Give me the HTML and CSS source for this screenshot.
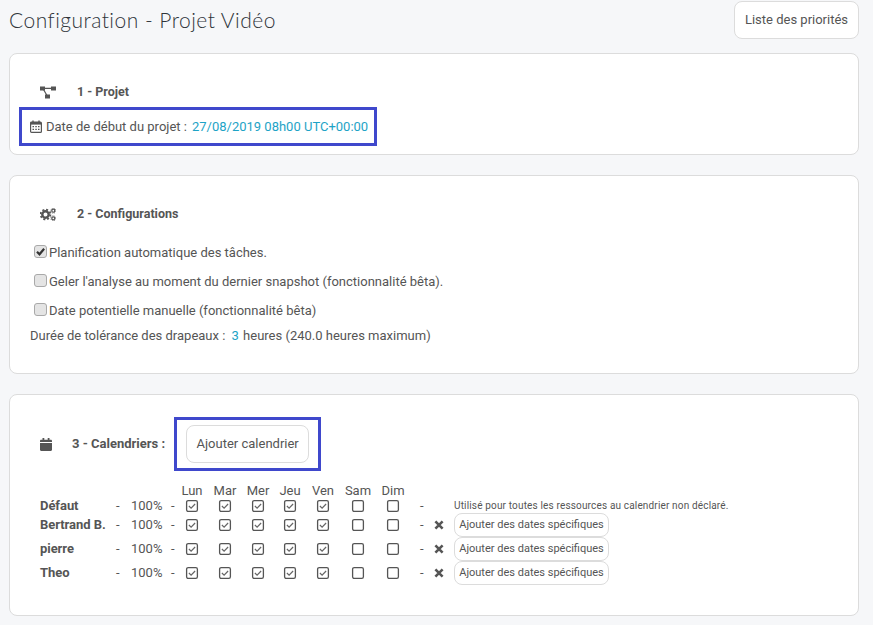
FILE: index.html
```html
<!DOCTYPE html>
<html lang="fr">
<head>
<meta charset="utf-8">
<title>Configuration - Projet Vidéo</title>
<link rel="stylesheet" href="styles.css">
</head>
<body>
<svg class="defs" width="0" height="0" aria-hidden="true">
  <symbol id="box-on" viewBox="0 0 14 14"><rect x="1.6" y="1.6" width="10.8" height="10.8" rx="1.6" fill="#fff" stroke="#555" stroke-width="1.3"/><path d="M3.9 7l2.2 2.2 4-4.2" fill="none" stroke="#666" stroke-width="1.2"/></symbol>
  <symbol id="box-off" viewBox="0 0 14 14"><rect x="1.6" y="1.6" width="10.8" height="10.8" rx="1.6" fill="#fff" stroke="#555" stroke-width="1.3"/></symbol>
  <symbol id="times" viewBox="0 0 12 12"><path d="M2.4 2.4l7.2 7.2M9.6 2.4l-7.2 7.2" fill="none" stroke="#555" stroke-width="2.6"/></symbol>
</svg>

<header class="top">
  <h1 class="title">Configuration - Projet Vidéo</h1>
  <button class="btn btn-top">Liste des priorités</button>
</header>

<section class="card card-1">
  <div class="heading">
    <svg class="ico-head" viewBox="0 0 16 12"><path d="M0 0h5v4H0zM11 0h5v4h-5zM5 8h5v4H5z" fill="#555"/><path d="M4 1.800h8M3.500 3l3.500 6" stroke="#555" stroke-width="1.200" fill="none"/></svg>
    <h2>1 - Projet</h2>
  </div>
  <div class="mark mark-date">
    <svg class="ico-date" viewBox="0 0 12 13"><rect x=".6" y="2" width="10.800" height="10.400" rx="1" fill="none" stroke="#555" stroke-width="1.200"/><path d="M1 2h10v2.600H1z" fill="#555"/><path d="M3 .5v2.500M9 .5v2.500" stroke="#555" stroke-width="1.400"/><path d="M2.500 6h1.500v1.300H2.500zM5.300 6h1.500v1.300H5.300zM8 6h1.500v1.300H8zM2.500 8.800h1.500v1.300H2.500zM5.300 8.800h1.500v1.300H5.300zM8 8.800h1.500v1.300H8z" fill="#555"/></svg>
    <span>Date de début du projet :</span>
    <span class="link">27/08/2019 08h00 UTC+00:00</span>
  </div>
</section>

<section class="card card-2">
  <div class="heading">
    <svg class="ico-head" viewBox="0 0 16 13"><circle cx="5.500" cy="6.500" r="3.200" fill="none" stroke="#555" stroke-width="2.400"/><circle cx="5.500" cy="6.500" r="4.900" fill="none" stroke="#555" stroke-width="1.800" stroke-dasharray="2 1.850"/><circle cx="13.300" cy="2.700" r="1.500" fill="none" stroke="#555" stroke-width="1.300"/><circle cx="13.300" cy="2.700" r="2.500" fill="none" stroke="#555" stroke-width=".8" stroke-dasharray="1 .96"/><circle cx="13.300" cy="10.300" r="1.500" fill="none" stroke="#555" stroke-width="1.300"/><circle cx="13.300" cy="10.300" r="2.500" fill="none" stroke="#555" stroke-width=".8" stroke-dasharray="1 .96"/></svg>
    <h2>2 - Configurations</h2>
  </div>
  <label class="opt"><span class="native on"><svg viewBox="0 0 10 10"><path d="M1.800 5.200l2.300 2.300 4.200-5" fill="none" stroke="#333" stroke-width="2"/></svg></span>Planification automatique des tâches.</label>
  <label class="opt"><span class="native"></span>Geler l'analyse au moment du dernier snapshot (fonctionnalité bêta).</label>
  <label class="opt"><span class="native"></span>Date potentielle manuelle (fonctionnalité bêta)</label>
  <p class="tol">Durée de tolérance des drapeaux : <span class="link num">3</span> heures (240.0 heures maximum)</p>
</section>

<section class="card card-3">
  <div class="heading-3">
    <svg class="ico-cal" viewBox="0 0 12 13"><path d="M0 5h12v6.800c0 .7-.5 1.200-1.200 1.200H1.200C.5 13 0 12.500 0 11.800zM0 4V3c0-.7.5-1.200 1.200-1.200H2.500V0h1.800v1.800h3.400V0h1.800v1.800h1.300C11.500 1.800 12 2.300 12 3v1z" fill="#555"/></svg>
    <h2>3 - Calendriers :</h2>
    <div class="mark mark-add"><button class="btn btn-add">Ajouter calendrier</button></div>
  </div>
  <div class="grid">
    <span class="day d1">Lun</span><span class="day">Mar</span><span class="day">Mer</span><span class="day">Jeu</span><span class="day">Ven</span><span class="day">Sam</span><span class="day">Dim</span>

    <b class="name">Défaut</b><span>-</span><span>100%</span><span>-</span>
    <svg class="box"><use href="#box-on"/></svg><svg class="box"><use href="#box-on"/></svg><svg class="box"><use href="#box-on"/></svg><svg class="box"><use href="#box-on"/></svg><svg class="box"><use href="#box-on"/></svg><svg class="box"><use href="#box-off"/></svg><svg class="box"><use href="#box-off"/></svg>
    <span class="dash2">-</span><span></span><small class="note">Utilisé pour toutes les ressources au calendrier non déclaré.</small>

    <b class="name">Bertrand B.</b><span>-</span><span>100%</span><span>-</span>
    <svg class="box"><use href="#box-on"/></svg><svg class="box"><use href="#box-on"/></svg><svg class="box"><use href="#box-on"/></svg><svg class="box"><use href="#box-on"/></svg><svg class="box"><use href="#box-on"/></svg><svg class="box"><use href="#box-off"/></svg><svg class="box"><use href="#box-off"/></svg>
    <span class="dash2">-</span><svg class="x"><use href="#times"/></svg><button class="btn btn-date">Ajouter des dates spécifiques</button>

    <b class="name">pierre</b><span>-</span><span>100%</span><span>-</span>
    <svg class="box"><use href="#box-on"/></svg><svg class="box"><use href="#box-on"/></svg><svg class="box"><use href="#box-on"/></svg><svg class="box"><use href="#box-on"/></svg><svg class="box"><use href="#box-on"/></svg><svg class="box"><use href="#box-off"/></svg><svg class="box"><use href="#box-off"/></svg>
    <span class="dash2">-</span><svg class="x"><use href="#times"/></svg><button class="btn btn-date">Ajouter des dates spécifiques</button>

    <b class="name">Theo</b><span>-</span><span>100%</span><span>-</span>
    <svg class="box"><use href="#box-on"/></svg><svg class="box"><use href="#box-on"/></svg><svg class="box"><use href="#box-on"/></svg><svg class="box"><use href="#box-on"/></svg><svg class="box"><use href="#box-on"/></svg><svg class="box"><use href="#box-off"/></svg><svg class="box"><use href="#box-off"/></svg>
    <span class="dash2">-</span><svg class="x"><use href="#times"/></svg><button class="btn btn-date">Ajouter des dates spécifiques</button>
  </div>
</section>
</body>
</html>
```

FILE: styles.css
```css
* { box-sizing: border-box; }
html, body { height: 100%; }
body {
  margin: 0;
  padding: 1px 14px 0 9px;
  background: #f6f7f9;
  color: #555;
  font: 13px/18px Roboto, "Liberation Sans", sans-serif;
  overflow: hidden;
}
.defs { position: absolute; }
.top {
  display: flex;
  justify-content: space-between;
  align-items: flex-start;
  height: 52px;
}
.title {
  margin: 7px 0 0;
  font: 300 21px/24px Lato, "Open Sans", sans-serif;
  letter-spacing: .47px;
  color: #2f3439;
}
.btn {
  background: #fff;
  border: 1px solid #dcdcdc;
  border-radius: 8px;
  color: #555;
  font-family: Roboto, "Liberation Sans", sans-serif;
  padding: 0;
}
.btn-top { width: 125px; height: 38px; font-size: 13px; padding-bottom: 2px; }
.card {
  background: #fff;
  border: 1px solid #dcdcdc;
  border-radius: 8px;
  margin-bottom: 20px;
}
.card-1 { height: 102px; padding: 29px 0 0 9px; }
.card-2 { height: 199px; padding: 29px 0 0 20px; }
.card-3 { height: 222px; padding: 22px 0 0 30px; margin-bottom: 0; }
.heading { display: flex; align-items: center; height: 18px; padding-left: 10px; }
.card-1 .heading { padding-left: 21px; }
h2 { margin: 0; font-size: 12.500px; font-weight: 700; line-height: 18px; color: #555; }
.card-3 h2 { font-size: 13px; }
.ico-head { width: 16px; height: 13px; margin-right: 21px; flex: none; }
.mark { border: 3px solid #3f48cc; }
.mark-date {
  display: inline-flex;
  align-items: center;
  width: 358px;
  height: 39px;
  margin-top: 6px;
  padding-left: 8px;
  white-space: nowrap;
}
.ico-date { width: 12px; height: 13px; margin-right: 4px; flex: none; }
.link { color: #1ea3c6; }
.mark-date .link { margin-left: 5px; }
.opt { display: flex; align-items: center; height: 18px; margin-bottom: 11px; margin-left: 4px; }
.card-2 .heading + .opt { margin-top: 21px; }
.native {
  width: 13px;
  height: 13px;
  margin: -3px 2px 0 0;
  border: 1px solid #a9a9a9;
  border-radius: 3px;
  background: #e4e4e4;
  flex: none;
  display: flex;
}
.native.on svg { width: 11px; height: 11px; }
.tol { margin: -4px 0 0; }
.num { margin: 0 1px 0 3px; }
.heading-3 { display: flex; align-items: center; height: 54px; }
.ico-cal { width: 12px; height: 13px; margin-right: 20px; flex: none; }
.mark-add {
  display: flex;
  align-items: center;
  justify-content: center;
  width: 147px;
  height: 54px;
  margin-left: 9px;
}
.btn-add { width: 123px; height: 38px; font-size: 13px; padding-bottom: 1px; }
.grid {
  display: grid;
  grid-template-columns: 76px 15px 40px 5px 32px 34px 32px 32px 34px 36px 34px 23px 21px auto;
  grid-template-rows: 15px 14px 24px 24px 24px;
  align-items: center;
  justify-items: start;
  margin-top: 13px;
}
.day { justify-self: center; align-self: start; font-size: 13px; line-height: 14px; }
.d1 { grid-column-start: 5; }
.grid .day:nth-child(7) + b { grid-column-start: 1; }
.name { font-size: 13px; letter-spacing: -.05px; white-space: nowrap; }
.box { width: 14px; height: 14px; justify-self: center; }
.dash2 { margin-left: 10px; }
.x { width: 12px; height: 12px; }
.note { font-size: 10px; white-space: nowrap; letter-spacing: .16px; }
.btn-date { width: 155px; height: 24px; font-size: 11px; padding-bottom: 2px; grid-column-start: 14; }
```
